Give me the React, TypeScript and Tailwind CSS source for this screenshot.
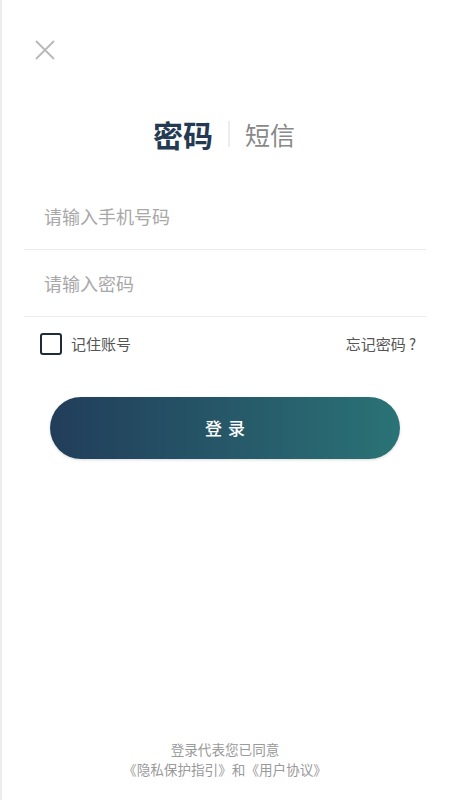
import { useState } from 'react';

export default function App() {
  const [tab, setTab] = useState<'pwd' | 'sms'>('pwd');
  const [remember, setRemember] = useState(false);

  return (
    <div
      className="relative flex h-[800px] w-[450px] flex-col overflow-hidden border-l-2 border-[#ececec] bg-white"
      style={{ fontFamily: '"Noto Sans CJK SC", "Noto Sans", sans-serif' }}
    >
      {/* Close */}
      <div className="pl-[31px] pt-[38px]">
        <svg width="24" height="24" viewBox="0 0 24 24" fill="none" stroke="#b8b8b8" strokeWidth="1.8">
          <path d="M3 3 L21 21 M21 3 L3 21" />
        </svg>
      </div>

      {/* Tabs */}
      <div className="mt-[52px] flex items-center justify-center pr-[4px]">
        <button
          onClick={() => setTab('pwd')}
          className={`leading-[40px] ${tab === 'pwd' ? 'text-[30px] font-bold text-[#233a52]' : 'text-[26px] text-[#888888]'}`}
        >
          密码
        </button>
        <div className="mx-[15px] h-[26px] w-[2px] bg-[#ededed]" />
        <button
          onClick={() => setTab('sms')}
          className={`leading-[40px] ${tab === 'sms' ? 'text-[30px] font-bold text-[#233a52]' : 'text-[25px] text-[#888888]'}`}
        >
          短信
        </button>
      </div>

      {/* Inputs */}
      <div className="mt-[30px] pl-[22px] pr-[24px]">
        <div className="flex h-[66px] items-center border-b border-[#ececec] pl-[20px]">
          <input
            placeholder="请输入手机号码"
            className="w-full bg-transparent text-[18px] text-[#333] placeholder-[#a8a8a8] outline-none"
          />
        </div>
        <div className="flex h-[67px] items-center border-b border-[#ececec] pl-[20px]">
          <input
            type="password"
            placeholder={tab === 'pwd' ? '请输入密码' : '请输入验证码'}
            className="w-full bg-transparent text-[18px] text-[#333] placeholder-[#a8a8a8] outline-none"
          />
        </div>
      </div>

      {/* Remember / forgot */}
      <div className="mt-[16px] flex items-center justify-between pl-[38px] pr-[34px]">
        <label className="flex items-center gap-[9px]" onClick={() => setRemember(!remember)}>
          <span className="h-[22px] w-[22px] rounded-[3px] border-2 border-[#1e2b3b]" />
          <span className="text-[15px] text-[#555555]">记住账号</span>
        </label>
        <span className="text-[15px] text-[#555555]">
          忘记密码<span className="ml-[3px]">?</span>
        </span>
      </div>

      {/* Login button */}
      <div className="mt-[41px] pl-[48px] pr-[50px]">
        <button className="h-[62px] w-full rounded-full bg-gradient-to-r from-[#213d5a] to-[#2a7376] pl-[6px] text-[17px] font-medium tracking-[6px] text-white shadow-[0_1px_3px_rgba(0,0,0,0.15)]">
          登录
        </button>
      </div>

      {/* Footer */}
      <div className="mt-auto pb-[21px] pr-[2px] text-center text-[13.6px] leading-[20px] text-[#9a9a9a]">
        <div>登录代表您已同意</div>
        <div>《隐私保护指引》和《用户协议》</div>
      </div>
    </div>
  );
}
